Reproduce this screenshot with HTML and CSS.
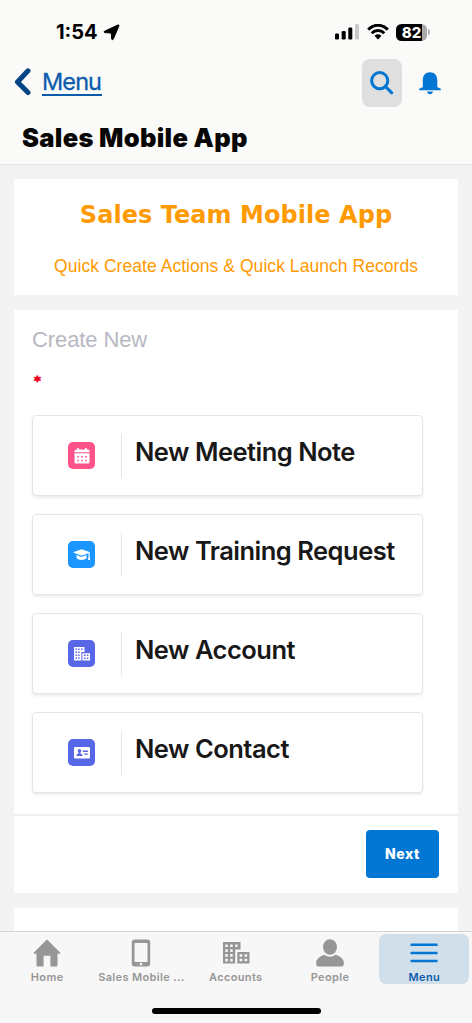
FILE: index.html
```html
<!DOCTYPE html>
<html lang="en">
<head>
<meta charset="utf-8">
<meta name="viewport" content="width=device-width, initial-scale=1">
<title>Sales Mobile App</title>
<link rel="stylesheet" href="styles.css">
</head>
<body>
<div class="screen">
  <header class="header">
    <div class="status">
      <div class="status-left">
        <span class="time">1:54</span>
        <svg class="location" width="17" height="17" viewBox="0 0 17 17"><path d="M1.500 7.300 14.800 1Q16.400.6 15.900 2L10.200 15.200Q9.300 16.500 8.700 15L8.300 9 1.600 8.600Q.3 8 1.500 7.300Z"/></svg>
      </div>
      <div class="status-right">
        <svg class="signal" width="25" height="16" viewBox="0 0 25 16"><rect x="0" y="9.500" width="4" height="6" rx="1.200"/><rect x="6.700" y="7" width="4" height="8.500" rx="1.200"/><rect x="13.300" y="3.500" width="4" height="12" rx="1.200"/><rect class="dim" x="20" y="0" width="4" height="15.500" rx="1.200"/></svg>
        <svg class="wifi" width="22" height="16" viewBox="0 0 22 16"><path d="M1.200 5.600C7-.2 15-.2 20.800 5.600M4.700 9.200C8.300 5.600 13.700 5.600 17.300 9.200"/><path class="solid" d="M7.500 11.700Q11 8.800 14.500 11.700L11.600 14.900Q11 15.500 10.400 14.900Z"/></svg>
        <span class="battery"><span class="battery-body">82</span><span class="battery-tip"></span></span>
      </div>
    </div>
    <nav class="topnav">
      <a class="back" href="#">
        <svg width="17" height="28" viewBox="0 0 17 28"><path d="M14 2.800 3.500 14 14 24.500"/></svg>
        <span>Menu</span>
      </a>
      <div class="actions">
        <button class="search" aria-label="Search"><svg width="24" height="24" viewBox="0 0 24 24"><circle cx="9.700" cy="9.700" r="8.100"/><path d="m15.500 15.700 6.300 6.100"/></svg></button>
        <svg class="bell" width="22" height="23" viewBox="0 0 22 23"><path d="M3.800 14.500V8.500C3.800 3.200 6.400.2 11 .2s7.300 3 7.300 8.300v6c0 .6.400 1 1.300 1.200l1.700.7c1 .5.900 1.800-.3 1.800H1c-1.200 0-1.300-1.300-.3-1.800l1.800-.7c.9-.2 1.300-.6 1.300-1.200ZM8.100 19.500h5.800c-.3 1.700-1.300 2.700-2.900 2.700s-2.600-1-2.900-2.700Z"/></svg>
      </div>
    </nav>
    <h1 class="title">Sales Mobile App</h1>
  </header>

  <main class="content">
    <section class="panel banner">
      <h2>Sales Team Mobile App</h2>
      <p>Quick Create Actions &amp; Quick Launch Records</p>
    </section>

    <section class="panel form">
      <div class="fields">
        <h3>Create New</h3>
        <div class="required">*</div>
        <div class="options">
          <button class="option">
            <span class="tile pink"><svg width="16" height="16" viewBox="0 0 16 16"><path d="M3.300 0h1.700v1.500h6V0h1.700v1.500H14Q15.500 1.500 15.500 3v1.200H.5V3Q.5 1.500 2 1.500h1.300Z"/><path fill-rule="evenodd" d="M.5 5.300h15v8.700q0 1.500-1.500 1.500H2Q.5 15.500.5 14ZM3.300 8v1.600h1.600V8Zm3.900 0v1.600h1.600V8Zm3.900 0v1.600h1.600V8ZM3.300 11.700v1.600h1.600v-1.600Zm3.900 0v1.600h1.600v-1.600Zm3.900 0v1.600h1.600v-1.600Z"/></svg></span>
            <span class="label">New Meeting Note</span>
          </button>
          <button class="option">
            <span class="tile blue"><svg width="17" height="16" viewBox="0 0 17 16"><path d="M8.500 2.200 16 4.700q.7.300.7.600v6.200h-1.200V6.200L9 8.500q-.5.100-1 0L.8 5.700q-.6-.4 0-.8Zm-5 5.700L8 9.700q.5.100 1 0l4.500-1.700v3.200Q11.800 13 8.500 13t-5-1.800ZM15.300 10.300l1.600 0 .2 2.600h-2Z"/></svg></span>
            <span class="label">New Training Request</span>
          </button>
          <button class="option">
            <span class="tile indigo"><svg width="16" height="14" viewBox="0 0 16 14"><path fill-rule="evenodd" d="M0 0h10.500v5H7.400v8.600H0ZM1.500 1.600v1.500H3V1.600Zm2.600 0v1.500h1.500V1.600Zm3.100 0v1.500h1.500V1.600ZM1.500 4.500V6H3V4.500Zm2.600 0V6h1.500V4.500ZM1.500 7.400v1.500H3V7.400Zm2.600 0v1.500h1.500V7.400ZM1.500 10.300v1.500H3v-1.500Zm2.600 0v1.500h1.500v-1.500ZM8.400 6.200H16v7.400H8.400ZM9.900 7.500v1.600h1.600V7.500Zm2.900 0v1.600h1.600V7.500ZM9.900 10.500v1.600h1.600v-1.600Zm2.900 0v1.600h1.600v-1.600Z"/></svg></span>
            <span class="label">New Account</span>
          </button>
          <button class="option">
            <span class="tile indigo"><svg width="16" height="12" viewBox="0 0 16 12"><path fill-rule="evenodd" d="M1.200 0h13.600Q16 0 16 1.200v9.100q0 1.200-1.200 1.200H1.200Q0 11.500 0 10.300V1.200Q0 0 1.200 0ZM5.500 2C4.300 2 3.800 2.800 3.800 3.900c0 .8.300 1.500.8 1.900v.8L3 7.300q-.5.300-.5 1v.8h6v-.8q0-.7-.5-1l-1.600-.7v-.8c.5-.4.800-1.100.8-1.900C7.200 2.800 6.700 2 5.500 2ZM8.800 3.600v1.300h5.100V3.600Zm1.300 2.900v1.300h3.800V6.500Z"/></svg></span>
            <span class="label">New Contact</span>
          </button>
        </div>
      </div>
      <footer class="form-footer"><button class="next">Next</button></footer>
    </section>

    <section class="panel next-panel"></section>
  </main>

  <footer class="bottom">
    <nav class="tabs">
      <a class="tab" href="#"><svg width="28" height="28" viewBox="0 0 28 28"><path d="M13.400.9q.6-.6 1.200 0L27.100 13.400q.9 1.300-.7 1.300h-1.900v11.900q0 .9-.9.900h-6.200V17.600q0-.8-.8-.8h-5.200q-.8 0-.8.8v9.900H4.400q-.9 0-.9-.9V14.700H1.600Q0 14.700.9 13.400Z"/></svg><span>Home</span></a>
      <a class="tab" href="#"><svg width="28" height="28" viewBox="0 0 28 28"><path fill-rule="evenodd" d="M7.800.5h12.400q3 0 3 3v21q0 3-3 3H7.800q-3 0-3-3v-21q0-3 3-3ZM8 4q-.5 0-.5.500v18q0 .5.500.5h12q.5 0 .5-.5v-18q0-.5-.5-.5Zm6 19.700a1.400 1.400 0 1 0 .01 0Z"/></svg><span>Sales Mobile ...</span></a>
      <a class="tab" href="#"><svg width="28" height="28" viewBox="0 0 28 28"><path fill-rule="evenodd" d="M1 3h17.500v7.500h-5.300v14H1ZM3.300 5.500v2.600h2.500V5.500Zm4.900 0v2.600h2.500V5.500Zm5 0v2.600h2.500V5.500ZM3.300 10.300v2.600h2.500v-2.600Zm4.900 0v2.600h2.500v-2.600ZM3.300 15.100v2.600h2.500v-2.600Zm4.900 0v2.600h2.500v-2.600ZM3.300 19.800v2.600h2.500v-2.600Zm4.900 0v2.600h2.500v-2.600ZM15.300 13h12.200v11.500H15.300ZM17.600 15.200v2.600h2.700v-2.600Zm4.900 0v2.600h2.700v-2.600ZM17.600 19.700v2.600h2.700v-2.600Zm4.900 0v2.600h2.700v-2.600Z"/></svg><span>Accounts</span></a>
      <a class="tab" href="#"><svg width="28" height="28" viewBox="0 0 28 28"><ellipse cx="14" cy="8" rx="7" ry="7.700"/><path d="M7.600 15.900q1-.3 2 .5 4.400 2.600 8.800 0 1-.8 2-.5 7.400 3 7.400 7.500v1.600q0 2.500-2.600 2.500H2.800Q.2 27.500.2 25v-1.600q0-4.500 7.400-7.500Z"/></svg><span>People</span></a>
      <a class="tab active" href="#"><svg width="28" height="28" viewBox="0 0 28 28"><path d="M.8 4.500h26.400q1 1.250 0 2.500H.8Q0 5.750.8 4.500ZM.8 12.700h26.400q1 1.250 0 2.500H.8q-.8-1.250 0-2.500ZM.8 20.800h26.400q1 1.250 0 2.500H.8q-.8-1.250 0-2.500Z"/></svg><span>Menu</span></a>
    </nav>
    <div class="home-indicator"></div>
  </footer>
</div>
</body>
</html>
```
FILE: styles.css
```css
* { box-sizing: border-box; }
body, h1, h2, h3, p { margin: 0; }
button { font: inherit; border: 0; padding: 0; }
a { text-decoration: none; }
svg { display: block; flex: none; }
body { font-family: Inter, "Liberation Sans", sans-serif; background: #f3f3f3; color: #181818; }
.screen { width: 472px; height: 1023px; display: flex; flex-direction: column; overflow: hidden; background: #f3f3f3; }

.header { height: 165px; flex: none; background: #fafaf9; border-bottom: 1px solid #e5e5e5; }
.status { height: 58px; padding: 18px 42px 0 56px; display: flex; justify-content: space-between; }
.status-left, .status-right { display: flex; align-items: center; height: 28px; }
.time { font-size: 20px; font-weight: 700; color: #000; letter-spacing: 0; }
.location { margin-left: 5px; fill: #000; stroke: #000; stroke-width: 1; stroke-linejoin: round; }
.signal { fill: #000; }
.signal .dim { fill: #c8c8c8; }
.wifi { margin-left: 7px; fill: none; stroke: #000; stroke-width: 3; }
.wifi .solid { fill: #000; stroke: none; }
.battery { margin-left: 7px; display: flex; align-items: center; }
.battery-body { width: 31px; height: 17px; border-radius: 5.500px; background: linear-gradient(90deg, #000 25.500px, #aaa 25.500px); color: #fff; font-size: 15px; font-weight: 800; line-height: 17px; text-align: center; }
.battery-tip { width: 2px; height: 6px; margin-left: 1px; border-radius: 0 3px 3px 0; background: #b5b5b5; }

.topnav { height: 50px; padding: 0 31px 0 14px; display: flex; align-items: center; justify-content: space-between; }
.back { display: flex; align-items: center; gap: 11px; margin-top: -2px; color: #0b5cab; font-size: 23.500px; letter-spacing: -.9px; }
.back span { height: 27px; line-height: 25px; padding-right: 1px; border-bottom: 2px solid #0b5cab; -webkit-text-stroke: .3px #0b5cab; }
.back svg { fill: none; stroke: #014486; stroke-width: 5; stroke-linecap: round; stroke-linejoin: round; }
.actions { display: flex; align-items: center; gap: 17px; }
.search { width: 40px; height: 48px; border-radius: 8px; background: #dfdfdf; display: flex; align-items: center; justify-content: center; }
.search svg { fill: none; stroke: #0176d3; stroke-width: 3; stroke-linecap: round; }
.bell { fill: #0176d3; }
.title { padding-left: 22px; height: 56px; line-height: 59px; font-size: 25.500px; font-weight: 900; color: #080707; letter-spacing: .3px; }

.content { flex: 1; min-height: 0; overflow: hidden; padding: 14px 14px 0; display: flex; flex-direction: column; gap: 15px; }
.panel { background: #fff; flex: none; }
.banner { height: 116px; padding-top: 21px; text-align: center; color: #ff9a00; }
.banner h2 { font: 700 24px/30px "DejaVu Sans", sans-serif; letter-spacing: .05px; }
.banner p { margin-top: 24px; font: 17.500px/24px "Liberation Sans", sans-serif; letter-spacing: .05px; }
.form { height: 583px; display: flex; flex-direction: column; }
.fields { flex: 1; padding: 15px 35px 0 18px; }
.fields h3 { font: 400 22px/30px "Liberation Sans", sans-serif; letter-spacing: -.1px; color: #b8b8c3; }
.required { height: 31px; margin: 15px 0 14px 2px; color: #ea001e; font: 700 13px/21px "DejaVu Sans", sans-serif; -webkit-text-stroke: .8px #ea001e; }
.options { display: flex; flex-direction: column; gap: 18px; }
.option { width: 391px; height: 81px; display: flex; align-items: center; background: #fff; border: 1px solid #e5e5e5; border-radius: 4px; box-shadow: 0 2px 3px rgba(0,0,0,.07); padding-left: 35px; color: #181818; }
.tile { width: 27px; height: 27px; border-radius: 5px; display: flex; align-items: center; justify-content: center; flex: none; }
.tile svg { fill: #fff; }
.pink { background: #ff538a; }
.blue { background: #1b96ff; }
.indigo { background: #5867e8; }
.label { height: 44px; margin-left: 26px; padding-left: 13px; border-left: 1px solid #e5e5e5; font-size: 25.500px; font-weight: 580; line-height: 36px; letter-spacing: -.5px; white-space: nowrap; }
.form-footer { height: 79px; border-top: 2px solid #f0f0f0; padding: 14px 19px 0; display: flex; justify-content: flex-end; }
.next { width: 73px; height: 48px; padding-bottom: 2px; border-radius: 4px; background: #0176d3; color: #fff; font-size: 14px; font-weight: 800; letter-spacing: .6px; }
.next-panel { height: 120px; }

.bottom { flex: none; height: 92px; border-top: 1px solid #d4d4d4; background: #f7f7f7; display: flex; flex-direction: column; align-items: center; }
.tabs { width: 472px; height: 76px; display: grid; grid-template-columns: repeat(5, 94.300px); align-items: start; padding-top: 2px; }
.tab { height: 50px; margin: 0 2px; padding-top: 5px; border-radius: 7px; display: flex; flex-direction: column; align-items: center; color: #969696; fill: currentColor; font-size: 11px; font-weight: 600; letter-spacing: .35px; }
.tab span { line-height: 14px; margin-top: 3px; white-space: nowrap; }
.active { background: #d1dfeb; color: #0b5cab; fill: #0176d3; }
.home-indicator { width: 169px; height: 6px; border-radius: 3px; background: #000; }
```
